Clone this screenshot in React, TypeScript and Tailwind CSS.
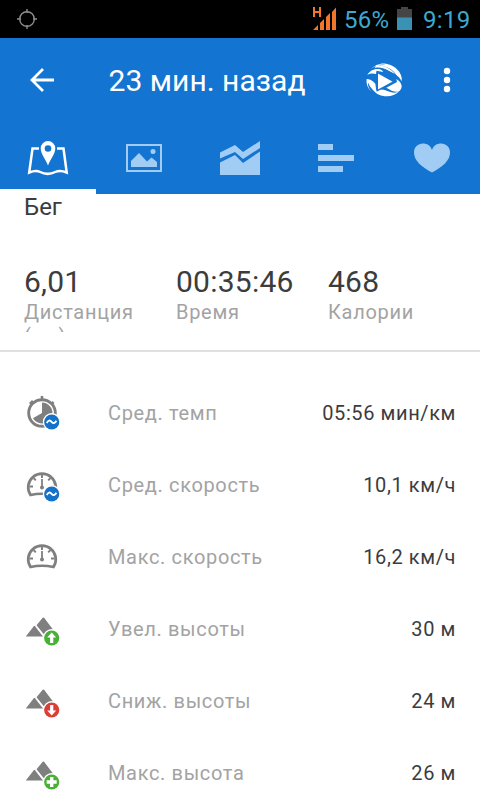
import type { ReactNode } from "react";

const GREY = "#7f7f7f";

function StatusBar() {
  return (
    <div className="flex h-[38px] items-center justify-between bg-black pl-[17px] pr-[10px] text-[#3da9d2]">
      <svg width="20" height="20" viewBox="0 0 20 20" fill="none" stroke="#8d8d8d" strokeWidth="1.4">
        <circle cx="10" cy="10" r="7.3" />
        <path d="M10 0v4M10 16v4M0 10h4M16 10h4" />
      </svg>
      <div className="flex h-full items-center">
        <svg width="26" height="38" viewBox="0 0 26 38" fill="#f2762a">
          <path d="M1 7h2v4h4V7h2v10H7v-4H3v4H1z" />
          <path d="M1 30l5-5v5zM8 23l4-4v11H8zM14 17l4-4v17h-4zM20 12l4-4.500V30h-4z" />
        </svg>
        <span className="ml-[6px] w-[48px] whitespace-nowrap pt-px text-[24px] leading-[38px] tracking-[0.3px]">56%</span>
        <svg className="ml-[5px]" width="16" height="38" viewBox="0 0 16 38">
          <path d="M0 9h4V7h7v2h4v21H0z" fill="#454545" />
          <path d="M0 17.500h15V30H0z" fill="#3992b4" />
        </svg>
        <span className="ml-[10px] w-[47px] whitespace-nowrap pt-px text-[24px] leading-[38px] tracking-[0.3px]">9:19</span>
      </div>
    </div>
  );
}

function Toolbar() {
  return (
    <div className="flex h-[84px] items-center text-white">
      <svg className="ml-[29px]" width="26" height="26" viewBox="0 0 26 26" fill="none" stroke="white" strokeWidth="2.800">
        <path d="M25 13H3M14 2L3 13l11 11" />
      </svg>
      <h1 className="ml-[53.500px] flex-1 whitespace-nowrap pt-[2px] text-[30px] font-normal leading-[36px] tracking-[0.030px]">23 мин. назад</h1>
      <svg className="mr-[37px]" width="44" height="40" viewBox="0 0 132 120" fill="white">
        <path d="M27 27C36 17 46 13 57 11C72 10 91 14 104 27C116 38 121 51 119 64C114 55 109 49 103 45C92 28 76 19 54 18C61 14 66 14 70 14C53 13 39 18 27 27z" />
        <path d="M16 44C23 32 36 25 51 27C57 28 61 32 64 36L44 32L42 42C33 39 24 40 16 44z" />
        <path d="M44 14C67 17 86 24 99 42L76 30C65 24 53 21 38 24z" />
        <path d="M14 57C22 57 31 61 40 71L43 92C58 83 73 92 88 97C97 99 105 98 111 94C99 108 78 112 60 107C50 104 42 100 35 92C27 84 19 73 18 67C17 77 20 85 27 93C17 85 12 70 14 57z" />
        <path d="M103 57C112 62 118 70 119 78C119 86 115 92 109 95C97 97 86 91 73 83L105 66z" />
        <path d="M46 37L96 65L46 92z" stroke="#1474d2" strokeWidth="4" />
      </svg>
      <svg className="mr-[29px]" width="8" height="26" viewBox="0 0 8 26" fill="white">
        <circle cx="4" cy="4" r="3.200" />
        <circle cx="4" cy="13" r="3.200" />
        <circle cx="4" cy="22" r="3.200" />
      </svg>
    </div>
  );
}

function Tab({ active, children }: { active?: boolean; children: ReactNode }) {
  return (
    <div className={active ? "flex h-full w-24 items-center justify-center border-b-[5px] border-white pt-[5px]" : "flex h-full w-24 items-center justify-center"}>
      {children}
    </div>
  );
}

function Tabs() {
  return (
    <div className="flex h-[72px]">
      <Tab active>
        <svg width="42" height="38" viewBox="0 0 42 38">
          <path d="M12 9.500H5.500L2.200 33.500c5-2 8-2 11-.5 5 2.500 10 2.500 15 0 3-1.500 7-1.500 11.500.5L36.500 9.500H30" fill="none" stroke="white" strokeWidth="2.500" />
          <path fillRule="evenodd" fill="white" d="M21 2a7.300 7.300 0 0 1 7.300 7.300C28.300 15 24 19 21 26.500 18 19 13.700 15 13.700 9.300A7.300 7.300 0 0 1 21 2zm0 4.200a3.300 3.300 0 1 0 0 6.600 3.300 3.300 0 0 0 0-6.600z" />
        </svg>
      </Tab>
      <Tab>
        <svg width="36" height="28" viewBox="0 0 36 28" fill="#a1cdf5">
          <path d="M1 1h34v26H1z" fill="none" stroke="#a1cdf5" strokeWidth="2" />
          <circle cx="27" cy="7.500" r="2.500" />
          <path d="M5 23v-6l8-8 8 8.500 4.500-4L31 18v5z" />
        </svg>
      </Tab>
      <Tab>
        <svg width="40" height="34" viewBox="0 0 40 34" fill="#a1cdf5">
          <path d="M0 11.500L15 4l8 7L40 0v7L23 18l-8-7L0 17.500z" />
          <path d="M0 21.500L15 14l8 8 17-11.500V34H0z" />
        </svg>
      </Tab>
      <Tab>
        <svg width="36" height="28" viewBox="0 0 36 28" fill="#a1cdf5">
          <path d="M0 0h15v6H0zM0 11h36v6H0zM0 22h25v6H0z" />
        </svg>
      </Tab>
      <Tab>
        <svg width="36" height="30" viewBox="0 0 36 30" fill="#a1cdf5">
          <path d="M18 29.500C8 24 0 18 0 9.500 0 4 4 .5 9 .5c4 0 7.500 2 9 6.500C19.500 2.500 23 .5 27 .5c5 0 9 3.500 9 9C36 18 28 24 18 29.500z" />
        </svg>
      </Tab>
    </div>
  );
}

function Stat({ value, label }: { value: string; label: string }) {
  return (
    <div className="w-[152px] whitespace-nowrap">
      <div className="text-[30px] leading-[36px] tracking-[0.25px] text-[#3c3c3c]">{value}</div>
      <div className="h-[32px] overflow-hidden whitespace-pre-line text-[20px] leading-[24px] tracking-[0.7px] text-[#a3a3a3]">{label}</div>
    </div>
  );
}

function Badge({ color, children }: { color: string; children: ReactNode }) {
  return (
    <>
      <circle cx="26.700" cy="27" r="8.900" fill="white" />
      <circle cx="26.700" cy="27" r="7.600" fill={color} />
      {children}
    </>
  );
}

const wave = <path d="M21.800 28c1.400-3 3.300-3 4.800-1.200s3.400 1.600 4.800-1" fill="none" stroke="white" strokeWidth="1.900" />;

function Stopwatch() {
  return (
    <>
      <circle cx="17" cy="18" r="13.300" fill="none" stroke={GREY} strokeWidth="2.900" />
      <path d="M15.700 1h2.600v3h-2.600zM4 8l3-3 2 2-3 3zM27.500 6l2 2-1.500 1.500-2-2z" fill={GREY} />
      <path d="M17 18V7.500a10.500 10.500 0 1 1-9.100 15.700z" fill={GREY} />
    </>
  );
}

function Gauge() {
  return (
    <g fill="none" stroke={GREY}>
      <path d="M5.500 28A13.800 13.800 0 1 1 28.500 28Q17 25.500 5.500 28z" strokeWidth="2.700" />
      <path d="M17 7v4M8.500 11l2.300 2.300M25.500 11l-2.300 2.300M4.500 19.500h3.500M29.500 19.500h-3.500" strokeWidth="1.900" />
      <path d="M17 12v9" strokeWidth="1.800" />
      <circle cx="17" cy="20.500" r="2" fill={GREY} stroke="none" />
    </g>
  );
}

function Mountains() {
  return (
    <>
      <path d="M11.300 14.500L17.700 6.800q.7-.8 1.400 0L28 18.500V25.500h-8z" fill={GREY} />
      <path d="M9.300 14l9.700 12" fill="none" stroke="white" strokeWidth="3" />
      <path d="M.8 25.500L8.800 15.200q.6-.7 1.200 0L18 25.500z" fill={GREY} />
    </>
  );
}

const arrow = <path d="M26.700 21.500l4.500 5h-2.900v5.500h-3.200v-5.500h-2.900z" fill="white" />;

const rows: { label: string; value: string; icon: ReactNode }[] = [
  { label: "Сред. темп", value: "05:56 мин/км", icon: <><Stopwatch /><Badge color="#1472c8">{wave}</Badge></> },
  { label: "Сред. скорость", value: "10,1 км/ч", icon: <><Gauge /><Badge color="#1472c8">{wave}</Badge></> },
  { label: "Макс. скорость", value: "16,2 км/ч", icon: <Gauge /> },
  { label: "Увел. высоты", value: "30 м", icon: <><Mountains /><Badge color="#48b035">{arrow}</Badge></> },
  { label: "Сниж. высоты", value: "24 м", icon: <><Mountains /><Badge color="#dc3d35"><g transform="rotate(180 26.700 27)">{arrow}</g></Badge></> },
  { label: "Макс. высота", value: "26 м", icon: <><Mountains /><Badge color="#48b035"><path d="M25 22h3.400v3.300h3.300v3.400h-3.300V32H25v-3.300h-3.300v-3.400H25z" fill="white" /></Badge></> },
];

export default function App() {
  return (
    <div className="h-[800px] w-[480px] overflow-hidden bg-white font-[Roboto,sans-serif]">
      <StatusBar />
      <header className="h-[156px] bg-[#1474d2]">
        <Toolbar />
        <Tabs />
      </header>
      <section className="h-[158px] border-b-2 border-[#e0e0e0] pl-6">
        <div className="h-[28px] text-[24px] leading-[26px] text-[#3c3c3c]">Бег</div>
        <div className="flex pt-[42px]">
          <Stat value="6,01" label={"Дистанция\n(км)"} />
          <Stat value="00:35:46" label="Время" />
          <Stat value="468" label="Калории" />
        </div>
      </section>
      <ul className="pt-[25px]">
        {rows.map((row) => (
          <li key={row.label} className="flex h-[72px] items-center pl-[25px] pr-6 text-[20px] leading-6">
            <svg className="mr-[47px] shrink-0" width="36" height="36" viewBox="0 0 36 36">{row.icon}</svg>
            <span className="flex-1 tracking-[0.65px] text-[#a3a3a3]">{row.label}</span>
            <span className="tracking-[0.6px] text-[#3c3c3c]">{row.value}</span>
          </li>
        ))}
      </ul>
    </div>
  );
}
